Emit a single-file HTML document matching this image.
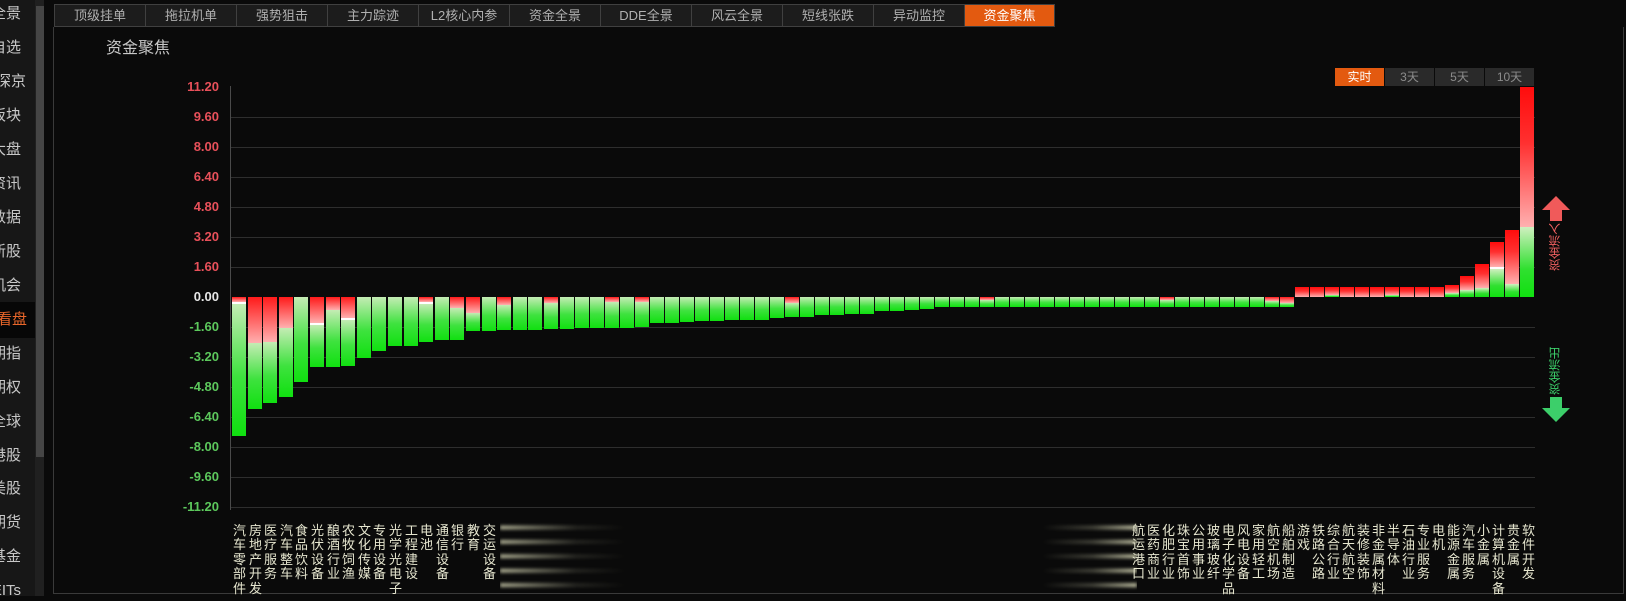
<!DOCTYPE html>
<html><head><meta charset="utf-8">
<style>
*{margin:0;padding:0;box-sizing:border-box}
body{width:1626px;height:596px;background:#0a0a0a;overflow:hidden;position:relative;font-family:"Liberation Sans","Noto Sans CJK SC",sans-serif}
#side{position:absolute;left:0;top:0;width:35px;height:596px;background:#171717}
.si{position:absolute;right:0;width:120px;text-align:right;font-size:15px;color:#c8c8c8;line-height:20px;white-space:nowrap}
#sb{position:absolute;left:35px;top:0;width:9px;height:596px;background:#202020}
#sbt{position:absolute;left:36px;top:6px;width:8px;height:451px;background:#454545}
#panel{position:absolute;left:53px;top:27px;width:1571px;height:567px;border:1px solid #3a3a3a;border-top:none}
.tab{position:absolute;top:4px;height:23px;width:91px;background:#1c1c1c;border:1px solid #404040;border-right:none;color:#b0b0b0;font-size:13px;line-height:21px;text-align:center}
.tab.on{background:#e35a10;color:#fff}
#title{position:absolute;left:106px;top:34px;font-size:16px;color:#c8c8c8}
.yl{position:absolute;width:60px;left:159px;text-align:right;font-size:13px;font-weight:bold;line-height:14px}
.gl{position:absolute;left:231px;width:1304px;height:1px;background:#2e2e2e}
#axis{position:absolute;left:230px;top:86px;width:1px;height:424px;background:#4a4a4a}
.btn{position:absolute;top:68px;height:18px;width:49px;background:#2a2a2a;color:#8c8c8c;font-size:12px;line-height:18px;text-align:center}
.btn.on{background:#e35a10;color:#fff}
.lb{position:absolute;top:523px;width:15px;font-size:13px;line-height:14.4px;color:#e6e6cf;text-align:center;font-family:"Noto Sans CJK SC",sans-serif}
#blur{position:absolute;left:500px;top:520px;width:637px;height:72px;
background:repeating-linear-gradient(to bottom,transparent 0,transparent 5px,rgba(225,225,190,.85) 6px,rgba(225,225,190,.85) 9px,transparent 10px,transparent 14.4px);
filter:blur(1.5px);
-webkit-mask-image:linear-gradient(to right,rgba(0,0,0,.9) 0,rgba(0,0,0,.15) 12%,rgba(0,0,0,0) 20%,rgba(0,0,0,0) 85%,rgba(0,0,0,.3) 93%,rgba(0,0,0,1) 100%)}
.vt{position:absolute;writing-mode:vertical-rl;transform:rotate(180deg);font-size:12px;line-height:13px;letter-spacing:0}
</style></head><body>
<div id="side">
<div class="si" style="top:4px;right:14px">全景</div>
<div class="si" style="top:38px;right:14px">自选</div>
<div class="si" style="top:72px;right:9px">沪深京</div>
<div class="si" style="top:106px;right:14px">板块</div>
<div class="si" style="top:140px;right:14px">大盘</div>
<div class="si" style="top:174px;right:14px">资讯</div>
<div class="si" style="top:208px;right:14px">数据</div>
<div class="si" style="top:242px;right:14px">新股</div>
<div class="si" style="top:276px;right:14px">机会</div>
<div style="position:absolute;left:0;top:302px;width:35px;height:36px;background:#070707"></div>
<div class="si" style="top:310px;right:8px;color:#e8662a">看盘</div>
<div class="si" style="top:344px;right:14px">期指</div>
<div class="si" style="top:378px;right:14px">期权</div>
<div class="si" style="top:412px;right:14px">全球</div>
<div class="si" style="top:446px;right:14px">港股</div>
<div class="si" style="top:479px;right:14px">美股</div>
<div class="si" style="top:513px;right:14px">期货</div>
<div class="si" style="top:547px;right:14px">基金</div>
<div class="si" style="top:581px;right:14px">REITs</div>
</div>
<div id="sb"></div><div id="sbt"></div>
<div id="panel"></div>

<div class="tab" style="left:54px">顶级挂单</div>
<div class="tab" style="left:145px">拖拉机单</div>
<div class="tab" style="left:236px">强势狙击</div>
<div class="tab" style="left:327px">主力踪迹</div>
<div class="tab" style="left:418px">L2核心内参</div>
<div class="tab" style="left:509px">资金全景</div>
<div class="tab" style="left:600px">DDE全景</div>
<div class="tab" style="left:691px">风云全景</div>
<div class="tab" style="left:782px">短线张跌</div>
<div class="tab" style="left:873px">异动监控</div>
<div class="tab on" style="left:964px;border-right:1px solid #404040">资金聚焦</div>

<div id="title">资金聚焦</div>

<div class="btn on" style="left:1335px">实时</div>
<div class="btn" style="left:1385px">3天</div>
<div class="btn" style="left:1435px">5天</div>
<div class="btn" style="left:1485px">10天</div>

<div class="yl" style="top:80px;color:#e8505a">11.20</div>
<div class="yl" style="top:110px;color:#e8505a">9.60</div>
<div class="yl" style="top:140px;color:#e8505a">8.00</div>
<div class="yl" style="top:170px;color:#e8505a">6.40</div>
<div class="yl" style="top:200px;color:#e8505a">4.80</div>
<div class="yl" style="top:230px;color:#e8505a">3.20</div>
<div class="yl" style="top:260px;color:#e8505a">1.60</div>
<div class="yl" style="top:290px;color:#e6e6e6">0.00</div>
<div class="yl" style="top:320px;color:#5cc85c">-1.60</div>
<div class="yl" style="top:350px;color:#5cc85c">-3.20</div>
<div class="yl" style="top:380px;color:#5cc85c">-4.80</div>
<div class="yl" style="top:410px;color:#5cc85c">-6.40</div>
<div class="yl" style="top:440px;color:#5cc85c">-8.00</div>
<div class="yl" style="top:470px;color:#5cc85c">-9.60</div>
<div class="yl" style="top:500px;color:#5cc85c">-11.20</div>

<div class="gl" style="top:117px"></div><div class="gl" style="top:147px"></div>
<div class="gl" style="top:177px"></div><div class="gl" style="top:207px"></div>
<div class="gl" style="top:237px"></div><div class="gl" style="top:267px"></div>
<div class="gl" style="top:327px"></div><div class="gl" style="top:357px"></div>
<div class="gl" style="top:387px"></div><div class="gl" style="top:417px"></div>
<div class="gl" style="top:447px"></div><div class="gl" style="top:477px"></div>
<div class="gl" style="top:507px"></div>
<div id="axis"></div>
<div id="bars"></div>

<!-- arrows -->
<svg style="position:absolute;left:1540px;top:194px" width="32" height="230">
<polygon points="16,2 30,16 22,16 22,27 10,27 10,16 2,16" fill="#f05a5a"/>
<polygon points="10,203 22,203 22,214 30,214 16,228 2,214 10,214" fill="#3ccf6a"/>
</svg>
<div class="vt" style="left:1549px;top:223px;color:#f06060">资金流入</div>
<div class="vt" style="left:1549px;top:347px;color:#3ccf6a">资金流出</div>

<div id="blur"></div>

<div class="lb" style="left:232px">汽<br>车<br>零<br>部<br>件</div>
<div class="lb" style="left:248px">房<br>地<br>产<br>开<br>发</div>
<div class="lb" style="left:263px">医<br>疗<br>服<br>务</div>
<div class="lb" style="left:279px">汽<br>车<br>整<br>车</div>
<div class="lb" style="left:294px">食<br>品<br>饮<br>料</div>
<div class="lb" style="left:310px">光<br>伏<br>设<br>备</div>
<div class="lb" style="left:326px">酿<br>酒<br>行<br>业</div>
<div class="lb" style="left:341px">农<br>牧<br>饲<br>渔</div>
<div class="lb" style="left:357px">文<br>化<br>传<br>媒</div>
<div class="lb" style="left:372px">专<br>用<br>设<br>备</div>
<div class="lb" style="left:388px">光<br>学<br>光<br>电<br>子</div>
<div class="lb" style="left:404px">工<br>程<br>建<br>设</div>
<div class="lb" style="left:419px">电<br>池</div>
<div class="lb" style="left:435px">通<br>信<br>设<br>备</div>
<div class="lb" style="left:450px">银<br>行</div>
<div class="lb" style="left:466px">教<br>育</div>
<div class="lb" style="left:482px">交<br>运<br>设<br>备</div>

<div class="lb" style="left:1131px">航<br>运<br>港<br>口</div>
<div class="lb" style="left:1146px">医<br>药<br>商<br>业</div>
<div class="lb" style="left:1161px">化<br>肥<br>行<br>业</div>
<div class="lb" style="left:1176px">珠<br>宝<br>首<br>饰</div>
<div class="lb" style="left:1191px">公<br>用<br>事<br>业</div>
<div class="lb" style="left:1206px">玻<br>璃<br>玻<br>纤</div>
<div class="lb" style="left:1221px">电<br>子<br>化<br>学<br>品</div>
<div class="lb" style="left:1236px">风<br>电<br>设<br>备</div>
<div class="lb" style="left:1251px">家<br>用<br>轻<br>工</div>
<div class="lb" style="left:1266px">航<br>空<br>机<br>场</div>
<div class="lb" style="left:1281px">船<br>舶<br>制<br>造</div>
<div class="lb" style="left:1296px">游<br>戏</div>
<div class="lb" style="left:1311px">铁<br>路<br>公<br>路</div>
<div class="lb" style="left:1326px">综<br>合<br>行<br>业</div>
<div class="lb" style="left:1341px">航<br>天<br>航<br>空</div>
<div class="lb" style="left:1356px">装<br>修<br>装<br>饰</div>
<div class="lb" style="left:1371px">非<br>金<br>属<br>材<br>料</div>
<div class="lb" style="left:1386px">半<br>导<br>体</div>
<div class="lb" style="left:1401px">石<br>油<br>行<br>业</div>
<div class="lb" style="left:1416px">专<br>业<br>服<br>务</div>
<div class="lb" style="left:1431px">电<br>机</div>
<div class="lb" style="left:1446px">能<br>源<br>金<br>属</div>
<div class="lb" style="left:1461px">汽<br>车<br>服<br>务</div>
<div class="lb" style="left:1476px">小<br>金<br>属</div>
<div class="lb" style="left:1491px">计<br>算<br>机<br>设<br>备</div>
<div class="lb" style="left:1506px">贵<br>金<br>属</div>
<div class="lb" style="left:1521px">软<br>件<br>开<br>发</div>

<script>
var neg=[[-7.4,5,1],[-5.97,46],[-5.65,45],[-5.33,31],[-4.53,0],[-3.73,26,1],[-3.73,13],[-3.68,21,1],[-3.25,0],[-2.88,0],[-2.6,0],[-2.6,0],[-2.4,5,1],[-2.29,0],[-2.29,11],[-1.81,16],[-1.81,0],[-1.76,8],[-1.76,0],[-1.76,0],[-1.71,6],[-1.71,0],[-1.65,0],[-1.65,0],[-1.65,5],[-1.65,0],[-1.62,5],[-1.39,0],[-1.39,0],[-1.35,0],[-1.3,0],[-1.3,0],[-1.25,0],[-1.25,0],[-1.2,0],[-1.13,0],[-1.08,6],[-1.04,0],[-0.96,0],[-0.96,0],[-0.9,0],[-0.9,0],[-0.73,0],[-0.73,0],[-0.68,0],[-0.63,0]];
for(var k=0;k<22;k++)neg.push([-0.55,(k==3||k==15)?3:0]);
neg.push([-0.53,4]);neg.push([-0.53,6]);
var pos=[[0.53,0],[0.53,0],[0.53,2],[0.53,0],[0.53,0],[0.53,0],[0.53,2],[0.53,0],[0.53,0],[0.53,0],[0.64,4],[1.12,7],[1.76,9],[2.93,28,1],[3.57,13],[11.2,70]];
var all=neg.concat(pos),h='',Z=297,S=18.75;
for(var i=0;i<all.length;i++){
 var x=i<22?Math.round(232+15.6*i):575+15*(i-22),d=all[i],v=d[0],H=Math.round(Math.abs(v)*S);
 if(v<0){
  var r=d[1];
  h+='<div style="position:absolute;left:'+x+'px;top:'+Z+'px;width:14px;height:'+H+'px">';
  if(r)h+='<div style="height:'+r+'px;background:linear-gradient(#ff1a1a,#ffb0b0)"></div>';
  if(d[2])h+='<div style="height:2px;background:#fff"></div>';
  h+='<div style="height:'+(H-r-(d[2]?2:0))+'px;background:linear-gradient(#c4ecb4,#3ee23e 55%,#10e010)"></div></div>';
 }else{
  var g=d[1];
  h+='<div style="position:absolute;left:'+x+'px;top:'+(Z-H)+'px;width:14px;height:'+H+'px">';
  h+='<div style="height:'+(H-g-(d[2]?2:0))+'px;background:linear-gradient(#ff0c0c,#ff3030 40%,#ffb0b0)"></div>';
  if(d[2])h+='<div style="height:2px;background:#fff"></div>';
  if(g)h+='<div style="height:'+g+'px;background:linear-gradient(#d0f0c0,#30e030 60%,#10e010)"></div>';
  h+='</div>';
 }
}
document.getElementById('bars').innerHTML=h;
</script>
</body></html>
